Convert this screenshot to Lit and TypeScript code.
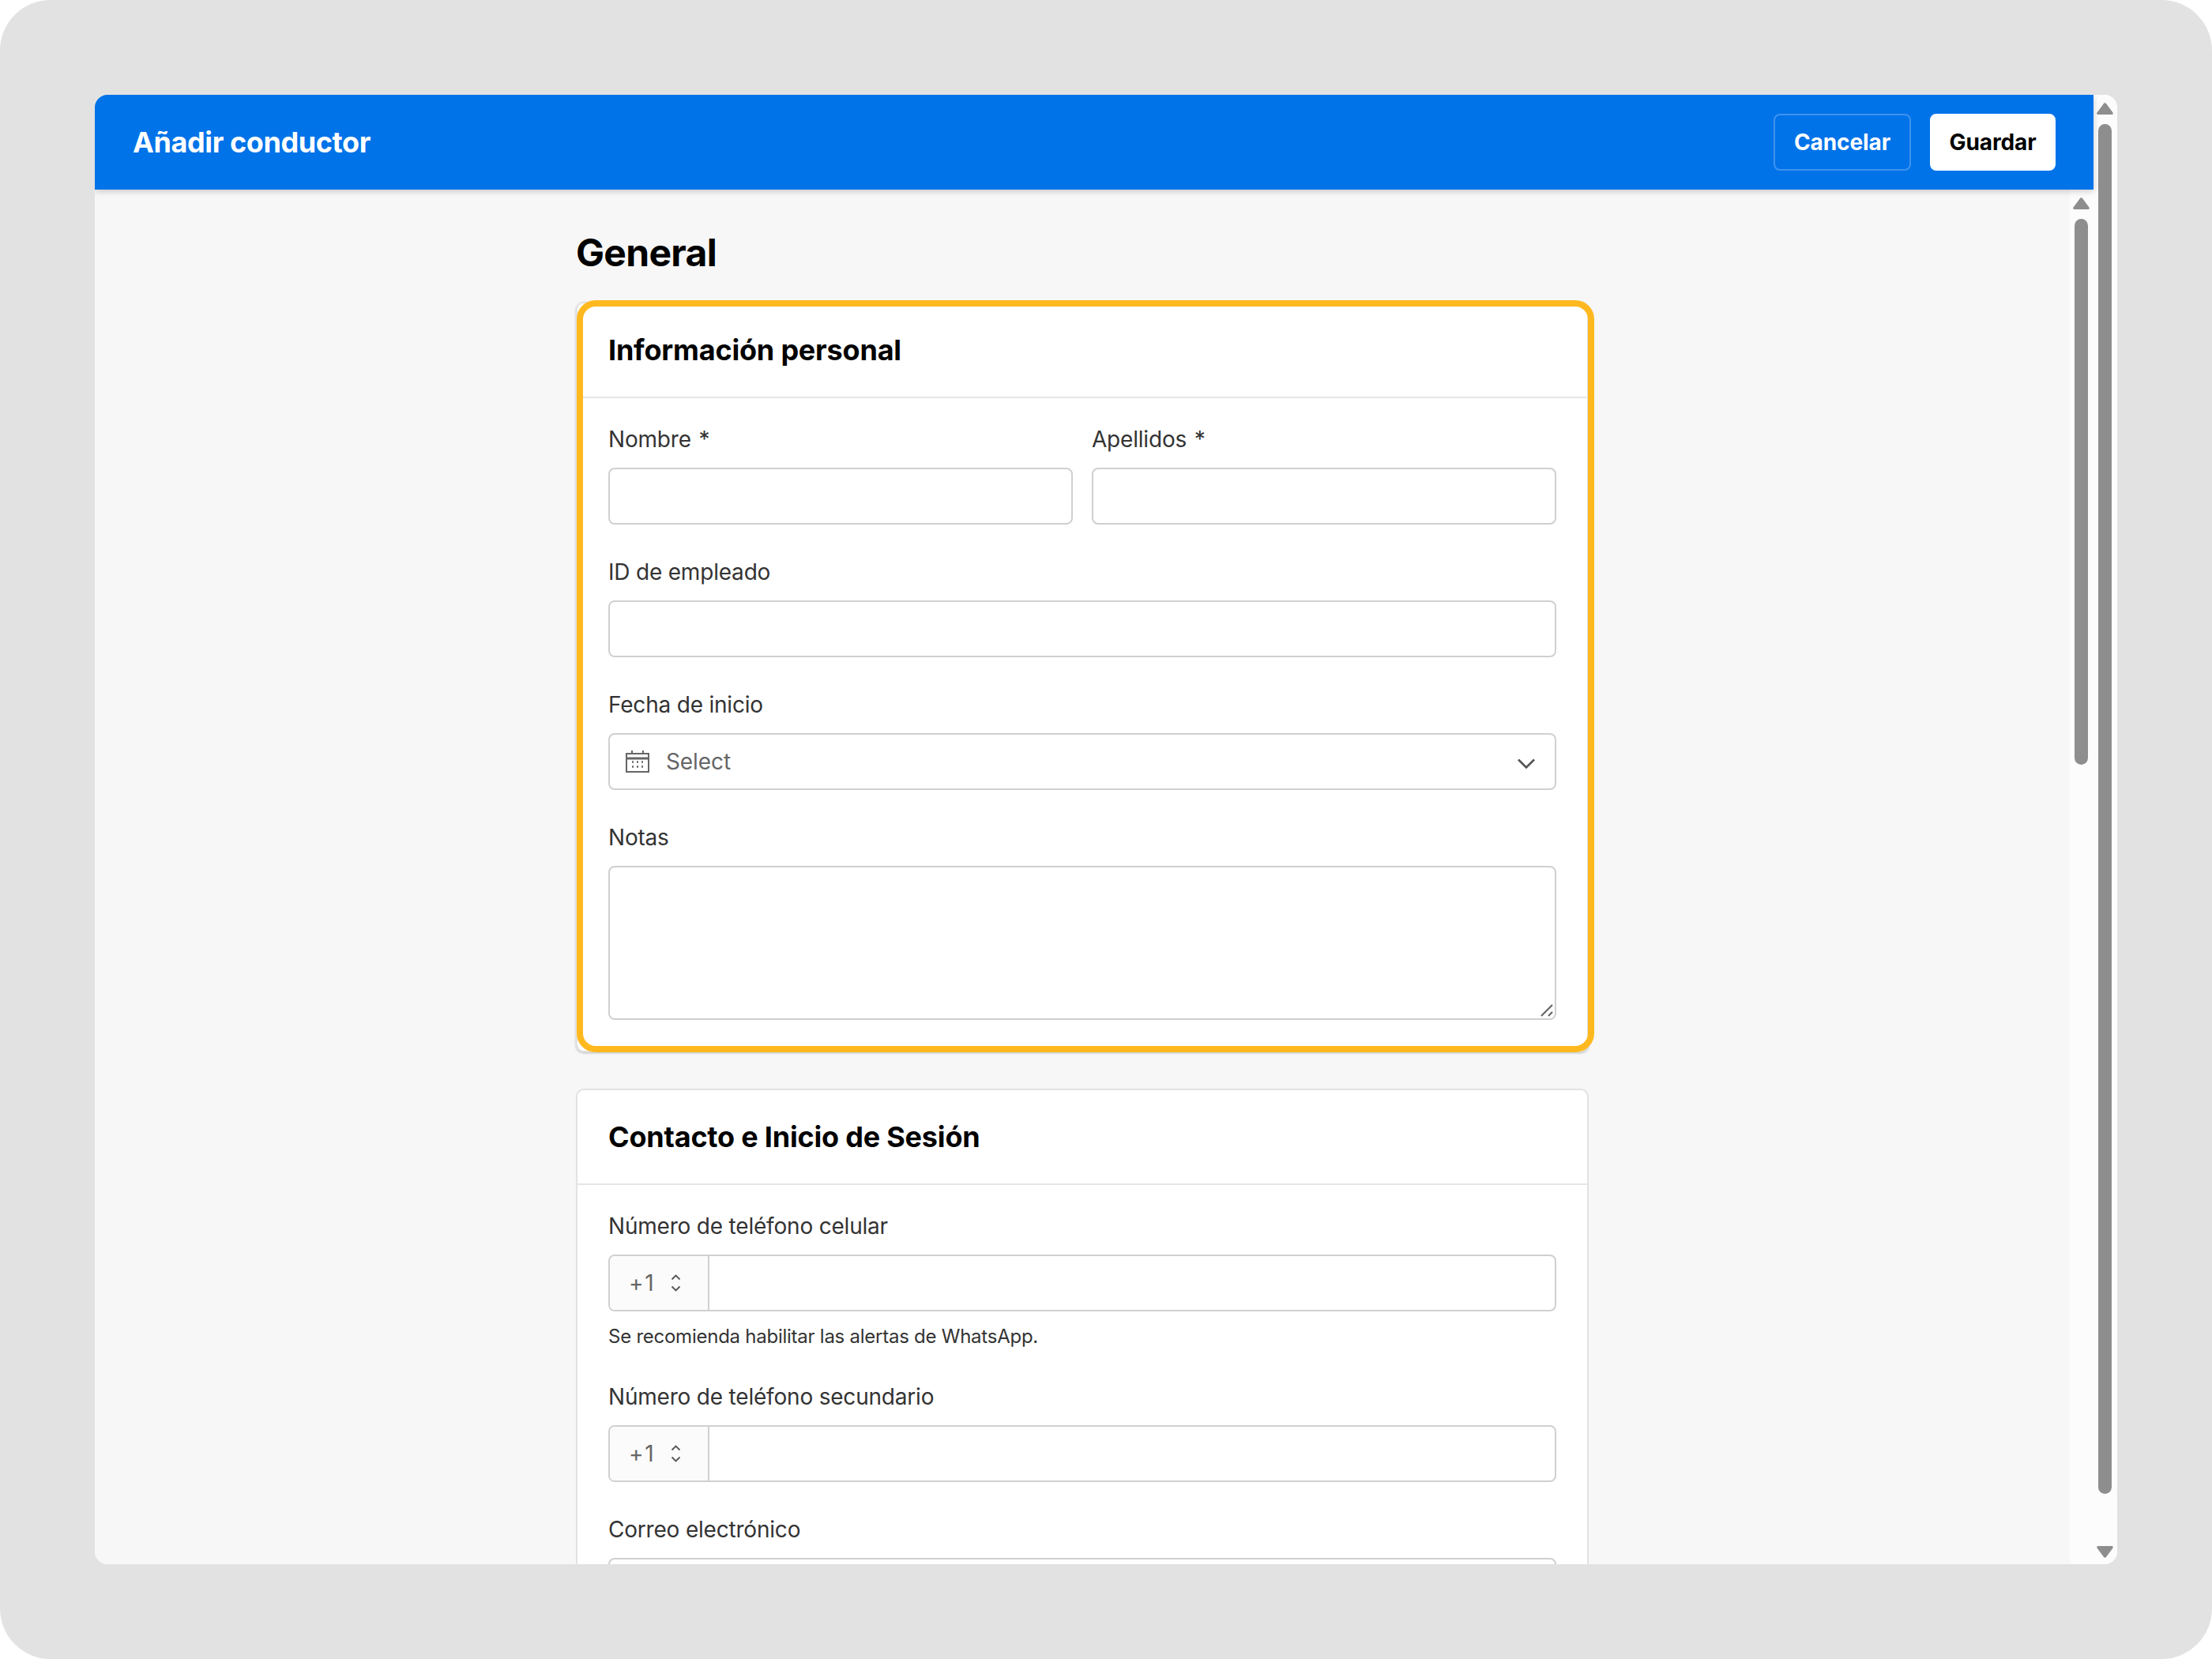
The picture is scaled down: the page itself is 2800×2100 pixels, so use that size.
import { LitElement, html, css, svg } from "lit";
import { customElement } from "lit/decorators.js";

const calendarIcon = svg`<svg class="cal" width="30" height="28" viewBox="0 0 30 28" fill="none" stroke="#666" stroke-width="2">
  <rect x="1" y="4" width="28" height="23" />
  <path d="M1 10h28" stroke-width="3" />
  <path d="M8 0v5M22 0v5" />
  <path d="M8 14.5h2M14 14.5h2M20 14.5h2M8 20.5h2M14 20.5h2M20 20.5h2" stroke-width="2.4" />
</svg>`;

const chevronDown = svg`<svg width="22" height="13" viewBox="0 0 22 13" fill="none" stroke="#555" stroke-width="2.6"><path d="M1 1.5l10 10 10-10" /></svg>`;

const updownIcon = svg`<svg width="13" height="22" viewBox="0 0 13 22" fill="none" stroke="#555" stroke-width="1.8"><path d="M1.5 6.5l5-5 5 5M1.5 15.5l5 5 5-5" /></svg>`;

const grip = svg`<svg class="grip" width="16" height="16" viewBox="0 0 16 16" stroke="#666" stroke-width="2.2" fill="none"><path d="M1 15L15 1M10 15l5-5" /></svg>`;

const arrowUp = svg`<svg width="21" height="15" viewBox="0 0 21 15" fill="#8e8e8e"><path d="M8.8 1.2a2 2 0 0 1 3.4 0l8.3 11.4c.6.9 0 2.4-1 2.4H1.5c-1 0-1.6-1.5-1-2.4z" /></svg>`;
const arrowDown = svg`<svg width="21" height="15" viewBox="0 0 21 15" fill="#8e8e8e"><path d="M8.8 13.8a2 2 0 0 0 3.4 0l8.3-11.4c.6-.9 0-2.4-1-2.4H1.5c-1 0-1.6 1.5-1 2.4z" /></svg>`;

@customElement("app-root")
export class AppRoot extends LitElement {
  static styles = css`
    :host {
      display: block;
      width: 2800px;
      height: 2100px;
      background: #fff;
      font-family: Inter, "Liberation Sans", sans-serif;
    }
    .page {
      width: 2800px;
      height: 2100px;
      box-sizing: border-box;
      padding: 120px;
      background: #e2e2e2;
      border-radius: 64px;
    }
    .window {
      height: 1860px;
      display: flex;
      border-radius: 16px;
      overflow: hidden;
      background: #fcfcfc;
    }
    .main {
      width: 2530px;
      display: flex;
      flex-direction: column;
      min-width: 0;
    }
    .topbar {
      height: 120px;
      flex: none;
      box-sizing: border-box;
      padding: 0 48px;
      display: flex;
      align-items: center;
      justify-content: space-between;
      background: #0073e9;
      box-shadow: 0 2px 8px rgba(0, 0, 0, 0.2);
      position: relative;
      z-index: 1;
    }
    .topbar h1 {
      margin: 0;
      font-size: 36px;
      font-weight: 650;
      color: #fff;
      letter-spacing: -0.4px;
    }
    .actions {
      display: flex;
      gap: 24px;
    }
    .btn {
      height: 72px;
      box-sizing: border-box;
      border-radius: 8px;
      font: 650 28px Inter, "Liberation Sans", sans-serif;
      letter-spacing: -0.1px;
      padding: 0;
      border: 2px solid transparent;
    }
    .btn.ghost {
      width: 174px;
      background: transparent;
      color: #fff;
      border-color: #3f93ee;
    }
    .btn.solid {
      width: 159px;
      background: #fff;
      color: #000;
      border-color: #fff;
    }
    .below {
      flex: 1;
      min-height: 0;
      display: flex;
    }
    .content {
      width: 2500px;
      flex: none;
      box-sizing: border-box;
      background: #f7f7f7;
      padding: 50px 0 0 609px;
      overflow: hidden;
    }
    .content h2 {
      margin: 0 0 32px;
      height: 60px;
      line-height: 60px;
      font-size: 48px;
      font-weight: 650;
      color: #000;
      letter-spacing: -0.7px;
    }
    .card {
      width: 1282px;
      box-sizing: border-box;
      background: #fff;
      border: 2px solid #e2e2e2;
      border-radius: 10px;
      position: relative;
      margin-bottom: 46px;
    }
    .card.first {
      box-shadow: 0 1px 3px rgba(0, 0, 0, 0.25);
    }
    .outline {
      position: absolute;
      left: -1px;
      top: -4px;
      right: -9px;
      bottom: -2px;
      border: 8px solid #ffb91f;
      border-radius: 24px;
      pointer-events: none;
    }
    .card-head {
      height: 120px;
      box-sizing: border-box;
      padding: 0 39px;
      display: flex;
      align-items: center;
      border-bottom: 2px solid #e6e6e6;
      font-size: 36px;
      font-weight: 650;
      letter-spacing: -0.2px;
      color: #000;
    }
    .card-body {
      padding: 34px 39px 39px;
      display: flex;
      flex-direction: column;
      gap: 42px;
    }
    .row {
      display: grid;
      grid-template-columns: 1fr 1fr;
      gap: 24px;
    }
    .field {
      display: flex;
      flex-direction: column;
    }
    .field label {
      height: 36px;
      line-height: 36px;
      margin-bottom: 18px;
      font-size: 28px;
      letter-spacing: -0.2px;
      color: #333;
    }
    .req {
      margin-left: 2px;
    }
    .box {
      height: 72px;
      box-sizing: border-box;
      border: 2px solid #d0d0d0;
      border-radius: 8px;
      background: #fff;
      display: flex;
      align-items: center;
    }
    .box.area {
      height: 195px;
      position: relative;
    }
    .grip {
      position: absolute;
      right: 2px;
      bottom: 2px;
    }
    .select {
      padding: 0 25px 0 20px;
      color: #666;
      font-size: 28px;
      letter-spacing: -0.1px;
    }
    .select .cal {
      margin-right: 21px;
    }
    .select .caret {
      margin-left: auto;
      margin-top: 4px;
      display: flex;
    }
    .prefix {
      width: 126px;
      height: 100%;
      box-sizing: border-box;
      flex: none;
      display: flex;
      align-items: center;
      gap: 20px;
      padding-left: 24px;
      background: #fbfbfb;
      border-right: 2px solid #d0d0d0;
      border-radius: 6px 0 0 6px;
      color: #666;
      font-size: 28px;
      letter-spacing: 1.6px;
    }
    .help {
      margin-top: 16px;
      height: 32px;
      line-height: 32px;
      font-size: 24px;
      letter-spacing: -0.25px;
      color: #333;
    }
    .bar {
      width: 30px;
      flex: none;
      box-sizing: border-box;
      padding-right: 1px;
      background: #fcfcfc;
      display: flex;
      flex-direction: column;
      align-items: center;
    }
    .bar svg {
      flex: none;
    }
    .bar.outer {
      padding-top: 10px;
      padding-bottom: 8px;
    }
    .bar.inner {
      padding-top: 10px;
    }
    .thumb {
      width: 17px;
      flex: none;
      background: #8e8e8e;
      border-radius: 9px;
      margin-top: 12px;
    }
    .outer .thumb {
      height: 1734px;
      margin-bottom: auto;
    }
    .inner .thumb {
      height: 691px;
    }
  `;

  field(label: unknown, control: unknown, help = "") {
    return html`<div class="field">
      <label>${label}</label>
      ${control}
      ${help ? html`<div class="help">${help}</div>` : ""}
    </div>`;
  }

  phone() {
    return html`<div class="box"><div class="prefix"><span>+1</span>${updownIcon}</div></div>`;
  }

  render() {
    const box = html`<div class="box"></div>`;
    return html`
      <div class="page">
        <div class="window">
          <div class="main">
            <div class="topbar">
              <h1>Añadir conductor</h1>
              <div class="actions">
                <button class="btn ghost">Cancelar</button>
                <button class="btn solid">Guardar</button>
              </div>
            </div>
            <div class="below">
              <div class="content">
                <h2>General</h2>
                <section class="card first">
                  <div class="card-head">Información personal</div>
                  <div class="card-body">
                    <div class="row">
                      ${this.field(html`Nombre <span class="req">*</span>`, box)}
                      ${this.field(html`Apellidos <span class="req">*</span>`, box)}
                    </div>
                    ${this.field("ID de empleado", box)}
                    ${this.field(
                      "Fecha de inicio",
                      html`<div class="box select">
                        ${calendarIcon}<span>Select</span><span class="caret">${chevronDown}</span>
                      </div>`,
                    )}
                    ${this.field("Notas", html`<div class="box area">${grip}</div>`)}
                  </div>
                  <div class="outline"></div>
                </section>
                <section class="card">
                  <div class="card-head">Contacto e Inicio de Sesión</div>
                  <div class="card-body">
                    ${this.field(
                      "Número de teléfono celular",
                      this.phone(),
                      "Se recomienda habilitar las alertas de WhatsApp.",
                    )}
                    ${this.field("Número de teléfono secundario", this.phone())}
                    ${this.field("Correo electrónico", box)}
                  </div>
                </section>
              </div>
              <div class="bar inner">
                ${arrowUp}
                <div class="thumb"></div>
              </div>
            </div>
          </div>
          <div class="bar outer">
            ${arrowUp}
            <div class="thumb"></div>
            ${arrowDown}
          </div>
        </div>
      </div>
    `;
  }
}
